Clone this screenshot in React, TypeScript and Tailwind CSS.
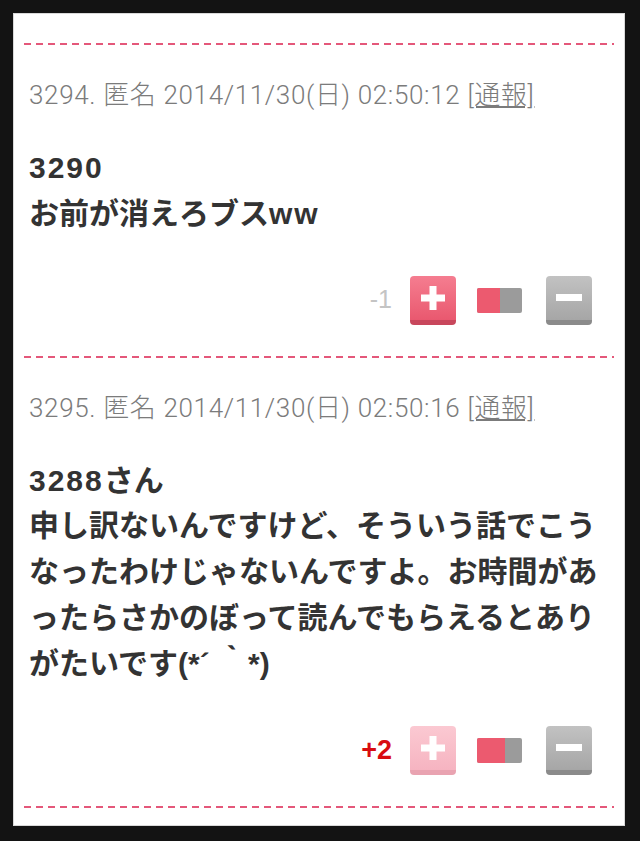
import React from 'react';

type Post = {
  no: number;
  time: string;
  lines: string[];
  score: string;
  scoreClass: string;
  plusClass: string;
  redWidth: string;
};

const posts: Post[] = [
  {
    no: 3294,
    time: '2014/11/30(日) 02:50:12',
    lines: ['3290', 'お前が消えろブスww'],
    score: '-1',
    scoreClass: 'text-[#c4c4c4] font-light text-[25px]',
    plusClass: 'bg-gradient-to-b from-[#f57d90] to-[#e9586f] border-[#c8475c]',
    redWidth: 'w-[23px]',
  },
  {
    no: 3295,
    time: '2014/11/30(日) 02:50:16',
    lines: [
      '3288さん',
      '申し訳ないんですけど、そういう話でこう',
      'なったわけじゃないんですよ。お時間があ',
      'ったらさかのぼって読んでもらえるとあり',
      'がたいです(*´ ｀*)',
    ],
    score: '+2',
    scoreClass: 'text-[#d80c10] font-bold text-[27px]',
    plusClass: 'bg-gradient-to-b from-[#fbc9d2] to-[#f6b4c1] border-[#e9a3b1]',
    redWidth: 'w-[28px]',
  },
];

function Dash() {
  return (
    <div className="mx-[10px] h-[2px] bg-[linear-gradient(to_right,#e4587a_58%,transparent_58%)] bg-[length:12px_2px] bg-repeat-x" />
  );
}

function BodyLine({ text }: { text: string }) {
  const parts = text.split(/([0-9a-z]+)/);
  return (
    <div>
      {parts.map((p, i) =>
        /^[0-9a-z]+$/.test(p) ? (
          <span key={i} className="tracking-[2px]">{p}</span>
        ) : (
          <React.Fragment key={i}>{p}</React.Fragment>
        )
      )}
    </div>
  );
}

function PostItem({ post }: { post: Post }) {
  return (
    <div className="px-[15px] pt-[35px] pb-[31px]">
      <div className="h-[30px] leading-[30px] text-[26px] font-light text-[#7b7b7b] whitespace-nowrap [font-family:Roboto,'Noto_Sans_CJK_JP',sans-serif] tracking-[0.65px]">
        {post.no}. 匿名 {post.time} <span className="underline underline-offset-2">[通報]</span>
      </div>

      <div className="mt-[35px] text-[30px] leading-[45.8px] font-bold text-[#333] [font-family:'Liberation_Sans','Noto_Sans_CJK_JP',sans-serif] whitespace-nowrap">
        {post.lines.map((l, i) => (
          <BodyLine key={i} text={l} />
        ))}
      </div>

      <div className="mt-[39px] flex items-center justify-end pr-[17px] h-[49px]">
        <span className={`mr-[18px] [font-family:'Liberation_Sans',sans-serif] ${post.scoreClass}`}>{post.score}</span>
        <div className={`w-[46px] h-[49px] rounded-[4px] border-b-[5px] flex items-center justify-center ${post.plusClass}`}>
          <svg width="24" height="24" viewBox="0 0 24 24">
            <rect x="0" y="8.5" width="24" height="7" fill="#fff" />
            <rect x="8.5" y="0" width="7" height="24" fill="#fff" />
          </svg>
        </div>
        <div className="ml-[21px] w-[45px] h-[25px] rounded-[2px] overflow-hidden flex bg-[#9b9b9b]">
          <div className={`${post.redWidth} h-full bg-[#ec5a6f]`} />
        </div>
        <div className="ml-[24px] w-[46px] h-[49px] rounded-[4px] border-b-[5px] border-[#8b8b8b] bg-gradient-to-b from-[#c2c2c2] to-[#a6a6a6] flex items-center justify-center">
          <svg width="26" height="7" viewBox="0 0 26 7">
            <rect x="0" y="0" width="26" height="7" fill="#fff" />
          </svg>
        </div>
      </div>
    </div>
  );
}

export default function App() {
  return (
    <div className="min-h-[841px] bg-[#131313] pt-[13px] pl-[13px] pr-[15px] pb-[15px]">
      <div className="h-[813px] bg-white border border-[#d9d9d9] pt-[29px] overflow-hidden">
        <Dash />
        {posts.map((p) => (
          <React.Fragment key={p.no}>
            <PostItem post={p} />
            <Dash />
          </React.Fragment>
        ))}
      </div>
    </div>
  );
}
